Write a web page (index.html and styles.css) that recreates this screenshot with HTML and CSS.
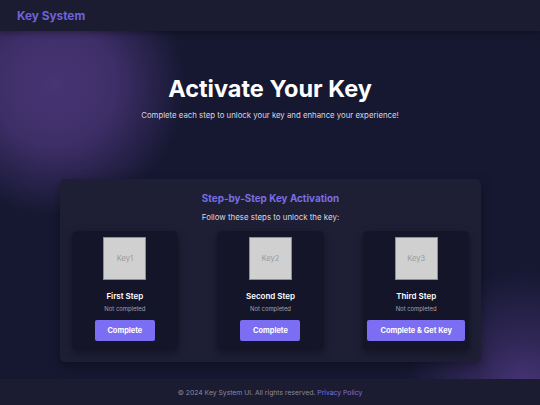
FILE: index.html
```html
<!DOCTYPE html>
<html lang="en">
  <head>
    <meta charset="UTF-8" />
    <meta name="viewport" content="width=device-width, initial-scale=1.0" />
    <title>Key System</title>
    <link rel="stylesheet" href="styles.css">
  </head>
  <body>
    <header class="topbar">
      <div class="logo">Key System</div>
    </header>

    <main class="page">
      <section class="hero">
        <h1>Activate Your Key</h1>
        <p>Complete each step to unlock your key and enhance your experience!</p>
      </section>

      <section class="panel">
        <h2>Step-by-Step Key Activation</h2>
        <p class="lead">Follow these steps to unlock the key:</p>

        <div class="steps">
          <div class="step">
            <div class="thumb">Key1</div>
            <h3>First Step</h3>
            <p class="status">Not completed</p>
            <button class="btn">Complete</button>
          </div>
          <div class="step">
            <div class="thumb">Key2</div>
            <h3>Second Step</h3>
            <p class="status">Not completed</p>
            <button class="btn">Complete</button>
          </div>
          <div class="step">
            <div class="thumb">Key3</div>
            <h3>Third Step</h3>
            <p class="status">Not completed</p>
            <button class="btn wide">Complete &amp; Get Key</button>
          </div>
        </div>
      </section>
    </main>

    <footer class="footer">
      <p>© 2024 Key System UI. All rights reserved. <a href="#">Privacy Policy</a></p>
    </footer>
  </body>
</html>
```

FILE: styles.css
```css
/* base */
* {
  box-sizing: border-box;
}

body {
  margin: 0;
  height: 405px;
  font-family: Inter, "Noto Sans", sans-serif;
  color: #fff;
  background-color: #161832;
  background-image:
    radial-gradient(circle at 55px 85px, rgba(70, 52, 115, 1) 0, rgba(66, 49, 110, 0.9) 60px, rgba(22, 24, 50, 0) 130px),
    radial-gradient(circle at 525px 390px, rgba(75, 55, 125, 0.95) 0, rgba(66, 49, 110, 0.6) 50px, rgba(22, 24, 50, 0) 120px);
  display: flex;
  flex-direction: column;
  overflow: hidden;
}

/* header */
.topbar {
  height: 31px;
  background-color: #1b1c31;
  box-shadow: 0 2px 6px rgba(0, 0, 0, 0.35);
  padding: 0 17px;
  display: flex;
  align-items: center;
  position: relative;
  z-index: 2;
}

.logo {
  font-size: 11.8px;
  font-weight: 700;
  color: #6e62d8;
}

/* main */
.page {
  flex: 1;
  display: flex;
  flex-direction: column;
  align-items: center;
}

.hero {
  text-align: center;
  padding-top: 44px;
}

.hero h1 {
  margin: 0;
  font-size: 23.5px;
  font-weight: 700;
  line-height: 28px;
}

.hero p {
  margin: 7px 0 0;
  font-size: 7.8px;
  color: #d6d6e0;
}

/* panel */
.panel {
  margin-top: 59px;
  width: 421px;
  background-color: #1e1e35;
  border-radius: 5px;
  box-shadow: 0 4px 12px rgba(0, 0, 0, 0.35);
  padding: 13px 11px 12px 12px;
  text-align: center;
}

.panel h2 {
  margin: 0;
  font-size: 9.9px;
  font-weight: 700;
  color: #7a6ee2;
}

.lead {
  margin: 8px 0 0;
  font-size: 7.9px;
  color: #d8d8e2;
}

.steps {
  margin-top: 9px;
  display: grid;
  grid-template-columns: repeat(3, 1fr);
  gap: 39px;
}

.step {
  background-color: #15152a;
  border-radius: 5px;
  box-shadow: 0 3px 8px rgba(0, 0, 0, 0.35);
  padding: 6px 2px 9px;
  display: flex;
  flex-direction: column;
  align-items: center;
}

.thumb {
  width: 43px;
  height: 43px;
  background-color: #d0d0d0;
  border: 1px solid #8c8c9a;
  color: #9a9a9a;
  font-size: 7.5px;
  display: flex;
  align-items: center;
  justify-content: center;
}

.step h3 {
  margin: 11px 0 0;
  font-size: 8px;
  font-weight: 600;
}

.status {
  margin: 4px 0 0;
  font-size: 5.9px;
  color: #a0a0b0;
}

.btn {
  margin-top: 8px;
  height: 21px;
  width: 60px;
  border: none;
  border-radius: 2px;
  background-color: #7b6ef3;
  color: #fff;
  font-family: inherit;
  font-size: 7.4px;
  font-weight: 700;
  cursor: pointer;
}

.btn.wide {
  width: 98px;
}

/* footer */
.footer {
  height: 26px;
  background-color: #1b1c31;
  display: flex;
  align-items: center;
  justify-content: center;
}

.footer p {
  margin: 0;
  font-size: 6.8px;
  color: #8a8aa0;
}

.footer a {
  color: #7a6ee2;
  text-decoration: none;
}
```
